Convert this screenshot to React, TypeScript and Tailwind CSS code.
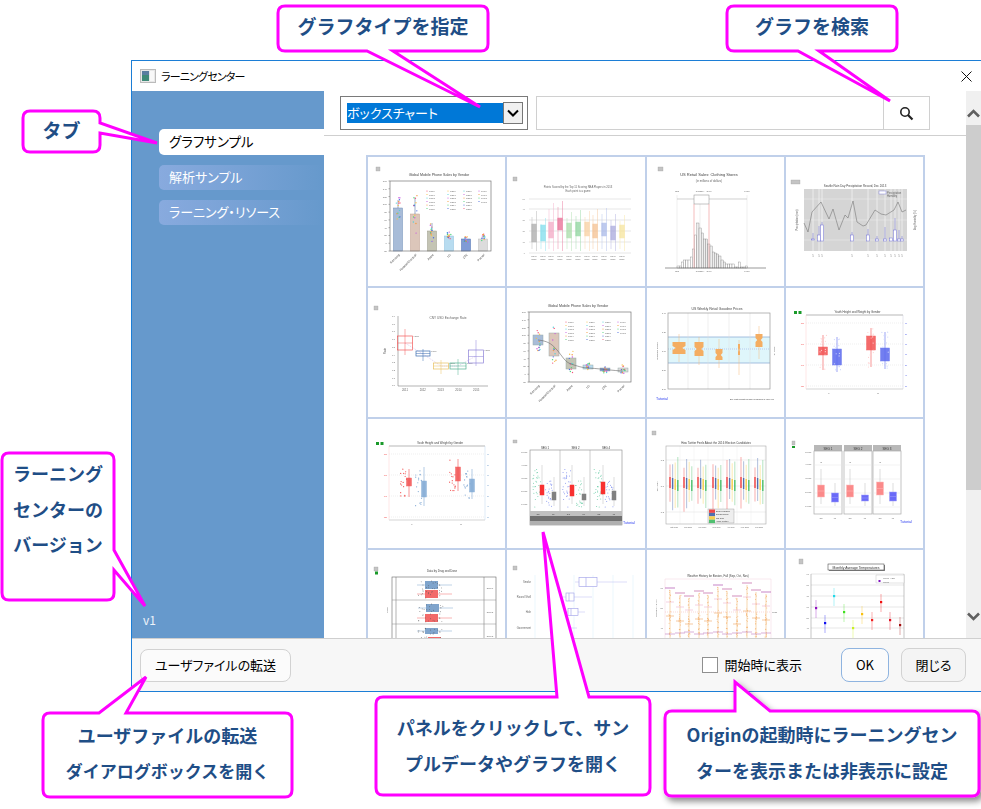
import { ReactNode } from "react";

// ---- thumbnail helpers ----
const SANS = "Liberation Sans, sans-serif";
const PALETTE = ["#f2567a", "#f6c14b", "#4fd1d9", "#c95be0", "#f39a3c", "#4fd67a", "#4a6be0"];

function noise(seed: number) {
    const v = Math.sin(seed * 127.1 + 11.7) * 43758.5453;
    return v - Math.floor(v);
}

function Txt({ x, y, s = 3, c = "#666", a = "middle", r, children }: { x: number; y: number; s?: number; c?: string; a?: "start" | "middle" | "end"; r?: string; children: ReactNode }) {
    return <text x={x} y={y} fontSize={s} fill={c} textAnchor={a} transform={r} fontFamily={SANS}>{children}</text>;
}

function Badge({ x, y, w = 4, h = 4 }: { x: number; y: number; w?: number; h?: number }) {
    return <rect x={x} y={y} width={w} height={h} fill="#c4c4c4" stroke="#999" strokeWidth={0.3} />;
}

function GreenDots({ x, y }: { x: number; y: number }) {
    return (
        <>
            <rect x={x} y={y} width={3} height={3} fill="#1a9a2a" />
            <rect x={x + 4.5} y={y} width={3} height={3} fill="#1a9a2a" />
        </>
    );
}

function Dots({ cx, y0, y1, n, seed, spread = 4, color, r = 0.7 }: { cx: number; y0: number; y1: number; n: number; seed: number; spread?: number; color?: string; r?: number }) {
    const items = [];
    for (let i = 0; i < n; i++) {
        const px = cx + (noise(seed + i) - 0.5) * spread;
        const py = y0 + noise(seed + i * 3 + 0.5) * (y1 - y0);
        items.push(<circle key={i} cx={px} cy={py} r={r} fill={color ?? PALETTE[i % PALETTE.length]} />);
    }
    return <>{items}</>;
}

function Box({ x, y0, y1, w, fill, stroke, med, o = 1 }: { x: number; y0: number; y1: number; w: number; fill: string; stroke?: string; med?: number; o?: number }) {
    return (
        <g opacity={o}>
            <rect x={x - w / 2} y={y0} width={w} height={y1 - y0} fill={fill} stroke={stroke ?? fill} strokeWidth={0.5} />
            {med !== undefined && <line x1={x - w / 2} x2={x + w / 2} y1={med} y2={med} stroke={stroke ?? "#fff"} strokeWidth={0.5} />}
        </g>
    );
}

function VLine({ x, y0, y1, c, w = 0.5, o = 1 }: { x: number; y0: number; y1: number; c: string; w?: number; o?: number }) {
    return <line x1={x} x2={x} y1={y0} y2={y1} stroke={c} strokeWidth={w} opacity={o} />;
}

function HLine({ y, x0, x1, c, w = 0.5, o = 1, dash }: { y: number; x0: number; x1: number; c: string; w?: number; o?: number; dash?: string }) {
    return <line x1={x0} x2={x1} y1={y} y2={y} stroke={c} strokeWidth={w} opacity={o} strokeDasharray={dash} />;
}

function Tutorial({ x, y }: { x: number; y: number }) {
    return <Txt x={x} y={y} s={3.6} c="#2a3cf0" a="start">Tutorial</Txt>;
}

const VENDORS = ["Samsung", "Huawei/Microsoft", "Apple", "LG", "ZTE", "Pocket"];
const DOT_RANGE = [[40, 63], [38, 77], [63, 85], [75, 83], [79, 85], [77, 86]];

function PhoneFrame({ x0, x1, xs, children }: { x0: number; x1: number; xs: number[]; children: ReactNode }) {
    const ticks = [160, 140, 120, 100, 80, 60, 40, 20, 0, -20];
    const columns = [x0 + 37, x0 + 58, x0 + 74, x0 + 89];
    return (
        <>
            <Txt x={71} y={19} s={3.6} c="#444">Global Mobile Phone Sales by Vendor</Txt>
            {ticks.map((t, i) => (
                <g key={t}>
                    <Txt x={x0 - 3} y={25 + i * 7.78} s={2.5} a="end">{t}</Txt>
                    <HLine y={24 + i * 7.78} x0={x0 - 1.5} x1={x0} c="#666" />
                </g>
            ))}
            {children}
            {columns.map((cx, c) =>
                [0, 1, 2, 3, 4, 5].map((row) =>
                    c === 3 && row > 3 ? null : (
                        <g key={`${c}-${row}`}>
                            <circle cx={cx} cy={34 + row * 3.5} r={0.6} fill={PALETTE[(c + row) % PALETTE.length]} />
                            <Txt x={cx + 2} y={35 + row * 3.5} s={2.2} a="start">Q{c + 1}'1{row}</Txt>
                        </g>
                    ),
                ),
            )}
            <rect x={x0} y={24} width={x1 - x0} height={70} fill="none" stroke="#777" strokeWidth={0.7} />
            {VENDORS.map((v, i) => (
                <Txt key={v} x={xs[i] + 2} y={98} s={3} c="#444" a="end" r={`rotate(-45 ${xs[i] + 2} 98)`}>{v}</Txt>
            ))}
        </>
    );
}

function PhoneBars() {
    const xs = [30, 47, 64, 81, 98, 115];
    const tops = [51, 57, 74, 79, 82, 82];
    const fills = ["#a8bcd8", "#dcc6ba", "#c4c4b4", "#b8dcf0", "#7f9bd6", "#dcdcdc"];
    const strokes = ["#6f8db8", "#c0a090", "#9a9a88", "#8cc0e0", "#4a6cb0", "#bbb"];
    return (
        <PhoneFrame x0={22} x1={123} xs={xs}>
            {xs.map((x, i) => (
                <g key={x}>
                    <Box x={x} y0={tops[i]} y1={94} w={9} fill={fills[i]} stroke={strokes[i]} />
                    <VLine x={x} y0={DOT_RANGE[i][0] + 3} y1={tops[i]} c="#3a5a90" />
                    <Dots cx={x} y0={DOT_RANGE[i][0]} y1={DOT_RANGE[i][1]} n={14} seed={i * 17 + 1} />
                </g>
            ))}
        </PhoneFrame>
    );
}

function PhoneBoxes() {
    const xs = [31, 47, 64, 81, 98, 116];
    const boxes = [[47, 57], [45, 68], [70, 81], [77, 81], [80, 83], [80, 84]];
    const fills = ["#a8bcd8", "#dcc6ba", "#c4c4b4", "#b8dcf0", "#7f9bd6", "#dcdcdc"];
    return (
        <PhoneFrame x0={22} x1={124} xs={xs}>
            {xs.map((x, i) => (
                <g key={x}>
                    <Box x={x} y0={boxes[i][0]} y1={boxes[i][1]} w={10} fill={fills[i]} stroke="#9aa" />
                    <Dots cx={x} y0={DOT_RANGE[i][0]} y1={DOT_RANGE[i][1]} n={14} seed={i * 23 + 2} />
                </g>
            ))}
            <path d="M31 52 C40 53 44 55 50 62 S58 74 64 76 S76 80 81 80 S110 83 116 83" fill="none" stroke="#666" strokeWidth={0.6} />
        </PhoneFrame>
    );
}

function PointsBoxes() {
    const xs = [27, 36, 44, 53, 62, 71, 80, 88, 97, 106, 115];
    const cols = ["#aaa", "#7fdcec", "#f3a8c4", "#e86a92", "#a8dca8", "#8cd49c", "#f8cfa0", "#f4c090", "#a8b8e8", "#a8a8dc", "#f6e49c"];
    const boxes = [[67, 85], [68, 84], [65, 81], [61, 73], [66, 81], [65, 79], [65, 79], [67, 81], [66, 79], [69, 83], [68, 81]];
    const tops = [54, 61, 46, 44, 55, 53, 54, 52, 51, 57, 58];
    return (
        <>
            <Badge x={6} y={20} />
            <Txt x={71} y={31} s={2.7}>Points Scored by the Top 11 Scoring NBA Players in 2013</Txt>
            <Txt x={71} y={35} s={2.7}>Each point is a game</Txt>
            {[42, 52, 63, 74, 85, 96].map((y, i) => (
                <g key={y}>
                    <HLine y={y} x0={22} x1={124} c="#ccc" />
                    <Txt x={18} y={y + 1} s={2.2} c="#888" a="end">{50 - i * 10}</Txt>
                </g>
            ))}
            {xs.map((x, i) => (
                <g key={x}>
                    <VLine x={x + 2.5} y0={tops[i]} y1={94} c={cols[i]} w={0.7} o={0.6} />
                    <VLine x={x - 2} y0={tops[i] + 6} y1={92} c={cols[i]} w={1} o={0.4} />
                    <Box x={x} y0={boxes[i][0]} y1={boxes[i][1]} w={4.5} fill={cols[i]} o={0.75} />
                    <Txt x={x} y={100} s={1.9}>Player</Txt>
                    <Txt x={x} y={102.5} s={1.9}>Name</Txt>
                </g>
            ))}
        </>
    );
}

function RetailHistogram() {
    const heights = [2, 2, 6, 8, 8, 8, 11, 19, 33, 45, 40, 35, 29, 29, 24, 22, 16, 15, 14, 12, 8, 6, 4, 4, 4, 4, 1, 1, 6, 1, 1, 2];
    return (
        <>
            <Badge x={11} y={10} w={5} />
            <Txt x={62} y={19} s={4} c="#444">US Retail Sales: Clothing Stores</Txt>
            <Txt x={62} y={25} s={2.8}>(in millions of dollars)</Txt>
            {[30, 100].map((x) => <VLine key={x} x={x} y0={38} y1={111} c="#ddd" />)}
            <VLine x={53} y0={40} y1={111} c="#ddd" />
            <HLine y={42} x0={30} x1={100} c="#bbb" w={0.7} />
            <rect x={47} y={38} width={15} height={9} fill="#fff" stroke="#888" strokeWidth={0.5} />
            {heights.map((h, i) => (
                <rect key={i} x={30 + i * 2.2} y={111 - h} width={2.2} height={h} fill={i > 8 && i < 22 ? "#eee" : "#fff"} stroke="#777" strokeWidth={0.35} />
            ))}
            <VLine x={47} y0={47} y1={111} c="#f0a0a0" w={0.7} />
            <VLine x={62} y0={47} y1={111} c="#f0a0a0" w={0.7} />
            <HLine y={111} x0={18} x1={119} c="#555" w={0.6} />
            {[[30, "7895"], [53, "24012594"], [62, "11096"], [100, "19201"]].map(([x, t]) => (
                <g key={x}>
                    <Txt x={x as number} y={115} s={1.9}>{t}</Txt>
                    <Txt x={x as number} y={35} s={1.9}>{t}</Txt>
                </g>
            ))}
        </>
    );
}

function SeattleRain() {
    const line = "M18 66 L22 75 L26 55 L35 45 L43 62 L47 52 L53 73 L59 58 L62 61 L67 44 L71 65 L77 69 L80 68 L89 53 L95 57 L100 58 L108 53 L112 45 L116 55 L120 53";
    const boxes = [[27, 82, 83, 3], [33, 78, 84, 3], [36, 68, 84, 3], [66, 78, 84, 3], [82, 78, 84, 3], [91, 82, 84, 3], [99, 82, 84, 3], [105, 81, 84, 3], [109, 73, 84, 3], [113, 82, 84, 3], [116, 82, 84, 3]];
    return (
        <>
            <Badge x={5} y={23} w={9} />
            <Txt x={69} y={30} s={2.9} c="#444">Seattle Rain Day Precipitation Record, Dec 2013</Txt>
            <rect x={18} y={32} width={103} height={62} fill="#d5d5d5" />
            {[42, 63, 83].map((y) => <HLine key={y} y={y} x0={18} x1={121} c="#eee" />)}
            {boxes.map(([x]) => <VLine key={x} x={x} y0={32} y1={94} c="#f2f2f2" w={0.8} />)}
            <path d={line} fill="none" stroke="#777" strokeWidth={0.6} />
            {boxes.map(([x, y0, y1, w]) => (
                <g key={x}>
                    <VLine x={x} y0={y0 - (x % 5) * 3} y1={y1} c="#7070d8" />
                    <Box x={x} y0={y0} y1={y1} w={w} fill="#fff" stroke="#7070d8" />
                    <Txt x={x} y={100} s={2.8} c="#888">5</Txt>
                </g>
            ))}
            <rect x={93} y={34} width={7} height={3} fill="#fff" stroke="#7070d8" strokeWidth={0.4} />
            <Txt x={101} y={36.5} s={2.6} a="start">Precipitation</Txt>
            <Txt x={101} y={40} s={2.6} a="start">Humidity</Txt>
            <Txt x={12} y={63} s={2.6} r="rotate(-90 12 63)">Precipitation (mm)</Txt>
            <Txt x={130} y={63} s={2.6} r="rotate(-90 130 63)">Avg Humidity (%)</Txt>
        </>
    );
}

function ExchangeRate() {
    const boxes = [
        { x: 37, y: [48, 62], wh: [41, 67], c: "#f25a5a", w: 15 },
        { x: 55, y: [63, 68], wh: [61, 73], c: "#3a6cb0", w: 14 },
        { x: 73, y: [75, 81], wh: [72, 86], c: "#e8c060", w: 15 },
        { x: 90, y: [75, 81], wh: [71, 87], c: "#50b090", w: 16 },
        { x: 108, y: [62, 75], wh: [52, 78], c: "#8c80d8", w: 15 },
    ];
    return (
        <>
            <Badge x={6} y={18} />
            <Txt x={80} y={31} s={3.2}>CNY USD Exchange Rate</Txt>
            <HLine y={98} x0={30} x1={120} c="#666" />
            <VLine x={30} y0={28} y1={98} c="#666" />
            {[0, 1, 2, 3, 4, 5, 6, 7, 8, 9].map((i) => <Txt key={i} x={27} y={29 + i * 7.7} s={2.2} a="end">0.{9 - i}</Txt>)}
            <Txt x={18} y={63} s={3} r="rotate(-90 18 63)">Rate</Txt>
            <path d="M37 55 L55 66 L73 78 L90 78 L108 68" fill="none" stroke="#c0a0e0" strokeWidth={0.5} strokeDasharray="1 1" />
            {boxes.map((b) => (
                <g key={b.x}>
                    <VLine x={b.x} y0={b.wh[0]} y1={b.wh[1]} c={b.c} />
                    <rect x={b.x - b.w / 2} y={b.y[0]} width={b.w} height={b.y[1] - b.y[0]} fill="none" stroke={b.c} strokeWidth={0.7} />
                    <HLine y={(b.y[0] + b.y[1]) / 2} x0={b.x - b.w / 2} x1={b.x + b.w / 2} c={b.c} />
                    <Txt x={b.x + b.w / 2 + 1} y={b.y[0] + 1} s={1.8} a="start">6.2977</Txt>
                </g>
            ))}
            {[2011, 2012, 2013, 2014, 2015].map((y, i) => <Txt key={y} x={37 + i * 17.8} y={103} s={2.8}>{y}</Txt>)}
        </>
    );
}

function GasolinePrices() {
    // x, width, top, notch, bottom, whisker top, whisker bottom
    const notches = [[32, 13, 54, 60, 66, 46, 74], [52, 9, 54, 61, 68, 49, 77], [72, 7, 61, 67, 72, 51, 80], [92, 2, 56, 62, 67, 52, 87], [112, 7, 46, 52, 59, 38, 71]];
    return (
        <>
            <Txt x={70} y={22} s={3.4} c="#444">US Weekly Retail Gasoline Prices</Txt>
            <rect x={21} y={49} width={102} height={26} fill="#dff6fb" />
            <HLine y={49} x0={21} x1={123} c="#8fb0d8" w={0.8} />
            <HLine y={75} x0={21} x1={123} c="#8fb0d8" w={0.8} />
            <HLine y={61} x0={21} x1={123} c="#8f9fe0" dash="1 1" />
            {[41, 61, 82, 103].map((x) => <VLine key={x} x={x} y0={25} y1={101} c="#ddd" />)}
            {notches.map(([x, w, top, mid, bottom, wt, wb]) => (
                <g key={x}>
                    <VLine x={x} y0={wt} y1={wb} c="#f4b878" />
                    <path d={`M${x - w / 2} ${top} H${x + w / 2} V${mid - 2} L${x + w / 4} ${mid} L${x + w / 2} ${mid + 2} V${bottom} H${x - w / 2} V${mid + 2} L${x - w / 4} ${mid} L${x - w / 2} ${mid - 2} Z`} fill="#f4ad62" />
                </g>
            ))}
            <rect x={21} y={25} width={102} height={76} fill="none" stroke="#999" strokeWidth={0.7} />
            {["3.40", "3.20", "3.00", "2.80", "2.60"].map((t, i) => <Txt key={t} x={19} y={26 + i * 19} s={2} a="end">{t}</Txt>)}
            <Txt x={11} y={63} s={2.5} r="rotate(-90 11 63)">Gasoline Prices</Txt>
            <Txt x={127} y={63} s={2.2} r="rotate(90 127 63)">Gasoline</Txt>
            <Tutorial x={9} y={112} />
            <Txt x={127} y={112} s={1.9} c="#444" a="end">Box Width indicates number of samples in each year</Txt>
        </>
    );
}

function YouthFrame({ title, x0, x1, boxes, red, blue, seed, leftC, rightC, bw, dx, dotRed, dotBlue }: { title: string; x0: number; x1: number; boxes: number[][]; red: string; blue: string; seed: number; leftC: string; rightC: string; bw: number; dx: number; dotRed: string; dotBlue: string }) {
    return (
        <>
            <GreenDots x={8} y={23} />
            <Txt x={(x0 + x1) / 2 + 3} y={25} s={2.9} c="#444">{title}</Txt>
            {[35, 56, 77, 98].map((y) => <HLine key={y} y={y} x0={x0} x1={x1} c="#ddd" dash="1 1" />)}
            <HLine y={27} x0={x0} x1={x1} c="#999" w={0.7} />
            <HLine y={101} x0={x0} x1={x1} c="#aaa" />
            <VLine x={x0} y0={27} y1={101} c={leftC} />
            <VLine x={x1} y0={27} y1={101} c={rightC} />
            {[35, 56, 77, 98].map((y, i) => <Txt key={y} x={x0 - 2} y={y + 1} s={2} c={red} a="end">{180 - i * 20}</Txt>)}
            {[35, 46, 56, 66, 77, 87, 98].map((y, i) => <Txt key={y} x={x1 + 2} y={y + 1} s={2} c={blue} a="start">{90 - i * 10}</Txt>)}
            {boxes.map(([x, y0, y1, wt, wb], i) => {
                const c = i % 2 ? blue : red;
                return (
                    <g key={x}>
                        <VLine x={x} y0={wt} y1={wb} c={c} w={0.6} />
                        <Box x={x} y0={y0} y1={y1} w={bw} fill={c} o={0.85} />
                        <Dots cx={x + dx} y0={wt} y1={wb} n={16} seed={seed + i * 7} spread={7} color={i % 2 ? dotBlue : dotRed} r={0.6} />
                    </g>
                );
            })}
            <Txt x={x0 + 23} y={106} s={2.4}>F</Txt>
            <Txt x={x0 + 72} y={106} s={2.4}>M</Txt>
        </>
    );
}

function SegmentPanel() {
    const reds = [[35, 66, 76], [65, 66, 77], [96, 63, 75]];
    const grays = [[47, 73, 81], [77, 75, 81], [107, 72, 81]];
    return (
        <>
            <Badge x={6} y={21} h={3} />
            <rect x={23} y={31} width={92} height={75} fill="#fff" stroke="#888" strokeWidth={0.6} />
            <rect x={23} y={92} width={92} height={5} fill="#c0c0c0" />
            <rect x={23} y={97} width={92} height={5} fill="#707070" />
            <rect x={23} y={102} width={92} height={4} fill="#b0b0b0" />
            {[53, 83].map((x) => <VLine key={x} x={x} y0={31} y1={92} c="#999" />)}
            {["SEG 1", "SEG 2", "SEG 4"].map((t, i) => <Txt key={t} x={38 + i * 30.5} y={30} s={2.8} c="#333">{t}</Txt>)}
            {[34, 47, 60, 73, 86].map((y, i) => <Txt key={y} x={21} y={y} s={2} a="end">{`${5 - i}.0x10⁵`}</Txt>)}
            {reds.map(([x, y0, y1], i) => (
                <g key={x}>
                    <Dots cx={x - 5} y0={50} y1={88} n={30} seed={i * 9 + 50} spread={9} color={i % 2 ? "#8090ee" : "#70ceaa"} r={0.5} />
                    <VLine x={x} y0={46} y1={85} c="#bbb" />
                    <Box x={x} y0={y0} y1={y1} w={4} fill="#f83030" />
                </g>
            ))}
            {grays.map(([x, y0, y1], i) => (
                <g key={x}>
                    <Dots cx={x - 5} y0={62} y1={88} n={24} seed={i * 11 + 70} spread={8} color={i % 2 ? "#70ceaa" : "#8090ee"} r={0.5} />
                    <VLine x={x} y0={58} y1={87} c="#bbb" />
                    <Box x={x} y0={y0} y1={y1} w={4} fill="#808080" />
                </g>
            ))}
            {[0, 1, 2, 3, 4, 5].map((i) => <Txt key={i} x={31 + i * 15.2} y={96} s={2.2} c="#333">{i % 2 ? "MI" : "CC"}</Txt>)}
            <Tutorial x={116} y={105} />
        </>
    );
}

function TwitterFeeds() {
    const groups = [23, 37, 51, 66, 80, 94, 108];
    const cols = ["#f04848", "#5070b0", "#f8d050", "#50c070"];
    return (
        <>
            <Badge x={5} y={12} />
            <Txt x={69} y={25} s={2.9} c="#444">How Twitter Feels About the 2016 Election Candidates</Txt>
            {groups.map((g) => <VLine key={g} x={g + 10} y0={27} y1={105} c="#eee" />)}
            {[41, 67, 93].map((y) => <HLine key={y} y={y} x0={19} x1={119} c="#ddd" />)}
            {groups.map((g, i) =>
                cols.map((c, j) => {
                    const top = 37 + noise(i * 4 + j) * 12;
                    const bottom = 78 + noise(i * 5 + j + 9) * 15;
                    return (
                        <g key={`${g}-${c}`}>
                            <VLine x={g + j * 2.6} y0={top} y1={bottom} c={c} w={1.1} o={0.4} />
                            <VLine x={g + j * 2.6} y0={58 + j} y1={69 + j} c={c} w={1.4} />
                        </g>
                    );
                }),
            )}
            <rect x={19} y={27} width={100} height={78} fill="none" stroke="#aaa" strokeWidth={0.6} />
            <rect x={61} y={90} width={26} height={14} fill="#eee" stroke="#777" strokeWidth={0.3} />
            {cols.map((c, i) => (
                <g key={c}>
                    <rect x={62} y={90.5 + i * 3.4} width={6} height={3.4} fill={c} />
                    <Txt x={69} y={93 + i * 3.4} s={2} c="#333" a="start">{["Bernie Sanders", "Donald Trump", "Ted Cruz", "Hillary Clinton"][i]}</Txt>
                </g>
            ))}
            {["Oct 2015", "Jan 2016", "Feb 2016", "Mar 2016", "Apr 2016", "May 2016", "Jun 2016"].map((t, i) => <Txt key={t} x={27 + i * 14.2} y={109} s={1.9}>{t}</Txt>)}
            {["0.5", "0.0", "-0.5"].map((t, i) => <Txt key={t} x={17} y={42 + i * 26} s={2.4} a="end">{t}</Txt>)}
            <Txt x={11} y={67} s={2.3} r="rotate(-90 11 67)">Sentiment</Txt>
        </>
    );
}

function SegmentStrips() {
    const panels = [[28, 28], [58, 28], [87, 28]];
    const reds = [[35, 66, 78], [64, 66, 78], [94, 63, 76]];
    const blues = [[49, 74, 83], [79, 76, 82], [107, 73, 82]];
    return (
        <>
            <Badge x={6} y={22} w={3} />
            <rect x={6} y={27} width={3} height={2} fill="#1a9a2a" />
            {panels.map(([x, w], i) => (
                <g key={x}>
                    <rect x={x} y={26} width={w} height={6} fill="#b8b8b8" />
                    <Txt x={x + w / 2} y={30.5} s={3} c="#333">{`SEG ${i + 1}`}</Txt>
                    <rect x={x} y={32} width={w} height={63} fill="#fff" stroke="#aaa" strokeWidth={0.7} />
                    {[46, 60, 74, 88].map((y) => <HLine key={y} y={y} x0={x} x1={x + w} c="#e4e4e4" />)}
                </g>
            ))}
            {reds.map(([x, y0, y1]) => (
                <g key={x}>
                    <VLine x={x} y0={50} y1={85} c="#bbb" />
                    <rect x={x - 0.3} y={43} width={0.8} height={0.8} fill="#555" />
                    <Box x={x} y0={y0} y1={y1} w={7} fill="#fb8a8a" med={(y0 + y1) / 2} stroke="#fbb" />
                </g>
            ))}
            {blues.map(([x, y0, y1]) => (
                <g key={x}>
                    <VLine x={x} y0={64} y1={87} c="#bbb" />
                    <Box x={x} y0={y0} y1={y1} w={7} fill="#6a6af8" med={(y0 + y1) / 2} stroke="#a0a0fa" />
                </g>
            ))}
            {[34, 46, 60, 74, 88].map((y, i) => <Txt key={y} x={26} y={y} s={2} a="end">{`${5 - i}.0x10⁵`}</Txt>)}
            {[35, 49, 64, 79, 94, 107].map((x, i) => <Txt key={x} x={x} y={100} s={2.2}>{i % 2 ? "MI" : "CC"}</Txt>)}
            <Tutorial x={114} y={104} />
        </>
    );
}

function DrugDose() {
    const rows = [[57, 31, 39, "#7fa4cc"], [57, 40, 48, "#f26a6a"], [58, 54, 62, "#7fa4cc"], [57, 64, 72, "#f26a6a"], [57, 78, 84, "#7fa4cc"], [60, 87, 92, "#f26a6a"]] as const;
    return (
        <>
            <Badge x={6} y={17} />
            <rect x={7} y={21.5} width={3} height={3} fill="#1a9a2a" />
            <Txt x={74} y={22} s={2.9} c="#444">Data by Drug and Dose</Txt>
            <rect x={24} y={27} width={104} height={70} fill="#fff" stroke="#666" strokeWidth={0.6} />
            <VLine x={28} y0={27} y1={97} c="#666" />
            <VLine x={116} y0={27} y1={97} c="#666" />
            {[50, 74].map((y) => <HLine key={y} y={y} x0={24} x1={128} c="#888" />)}
            {rows.map(([x, y0, y1, c], i) => (
                <g key={y0}>
                    <HLine y={(y0 + y1) / 2} x0={x - 8} x1={x + 27} c={c} />
                    <rect x={x} y={y0} width={13} height={y1 - y0} fill={c} />
                    <Dots cx={x + 5} y0={y0} y1={y1} n={16} seed={i * 5 + 90} spread={24} color="#555" r={0.45} />
                </g>
            ))}
            {["Drug 1", "Drug 2", "Drug 3"].map((t, i) => <Txt key={t} x={122} y={39 + i * 24} s={2.2}>{t}</Txt>)}
            <Txt x={20} y={60} s={2.4} r="rotate(-90 20 60)">Dose</Txt>
        </>
    );
}

function WordBoxes() {
    const rows = [{ l: "Smoke", y: 32, b: [72, 90], m: 79, e: 120, h: 9 }, { l: "Round Shell", y: 47, b: [59, 67], m: 62, e: 85, h: 8 }, { l: "Hole", y: 62, b: [61, 71], m: 64, e: 78, h: 7 }, { l: "Government", y: 78, b: [62, 63], m: 62, e: 70, h: 1 }];
    return (
        <>
            <Badge x={6} y={16} />
            {[28, 47, 67, 86, 106, 126].map((x) => <VLine key={x} x={x} y0={25} y1={89} c="#d6ecfa" />)}
            {rows.map((r) => (
                <g key={r.l}>
                    <Txt x={24} y={r.y + 1} s={2.6} a="end">{r.l}</Txt>
                    <HLine y={r.y} x0={r.b[0] - 4} x1={r.e} c="#b8b8f0" />
                    <rect x={r.b[0]} y={r.y - r.h / 2} width={r.b[1] - r.b[0]} height={r.h} fill="#fff" stroke="#9c9ce8" strokeWidth={0.6} />
                    <VLine x={r.m} y0={r.y - r.h / 2} y1={r.y + r.h / 2} c="#9c9ce8" w={0.6} />
                </g>
            ))}
        </>
    );
}

function WeatherBoston() {
    const xs = [23, 33, 42, 52, 61, 71, 80, 90, 100, 109, 119];
    const tops = [38, 43, 46, 41, 43, 35, 39, 46, 33, 40, 42];
    return (
        <>
            <Txt x={71} y={27} s={2.9} c="#444">Weather History for Boston, Fall (Sep, Oct, Nov)</Txt>
            {[38, 58, 78].map((y, i) => <Txt key={y} x={16} y={y + 1} s={2.2} a="end">{60 - i * 10}</Txt>)}
            <Txt x={10} y={58} s={2.3} r="rotate(-90 10 58)">Temperature (°F)</Txt>
            <HLine y={29} x0={18} x1={124} c="#f0d0dc" />
            <VLine x={18} y0={29} y1={92} c="#f0d0dc" />
            <VLine x={124} y0={29} y1={92} c="#f0d0dc" />
            <HLine y={62} x0={18} x1={124} c="#f4b0b0" dash="1 1" />
            <Txt x={125} y={63} s={2.1} a="start">Mean</Txt>
            {xs.map((x, i) => (
                <g key={x}>
                    <VLine x={x} y0={tops[i] + 2} y1={92} c="#f8d8b0" w={2} o={0.5} />
                    <Dots cx={x} y0={tops[i] + 2} y1={90} n={24} seed={i * 3 + 120} spread={2} color="#f4a050" r={0.45} />
                    <HLine y={tops[i]} x0={x - 5} x1={x + 5} c={i % 5 === 0 ? "#b050b0" : "#c060a0"} w={0.7} />
                    <HLine y={tops[i] + 14} x0={x - 4} x1={x + 4} c="#e8a0c0" />
                    <HLine y={tops[i] + 28} x0={x - 4} x1={x + 4} c="#e89040" />
                    <HLine y={84 - (i % 3)} x0={x - 5} x1={x + 5} c="#c890c8" w={0.7} />
                </g>
            ))}
        </>
    );
}

function MonthlyTemperature() {
    const pts = [[30, 58, "#9010c0"], [39, 73, "#1010f0"], [48, 46, "#20d8e8"], [58, 62, "#40e020"], [67, 78, "#c8f020"], [76, 64, "#f8c010"], [86, 70, "#f02020"], [95, 52, "#f01010"], [104, 70, "#e01020"], [114, 75, "#a01010"]] as const;
    return (
        <>
            <Badge x={13} y={9} h={5} />
            <rect x={43} y={15} width={56} height={6} fill="#888" />
            <rect x={42} y={14} width={56} height={6} fill="#fff" stroke="#333" strokeWidth={0.5} />
            <Txt x={70} y={18.5} s={3.4} c="#333">Monthly Average Temperatures</Txt>
            {[24, 35, 46, 57, 68, 78].map((y, i) => (
                <g key={y}>
                    <HLine y={y} x0={25} x1={118} c="#ccc" />
                    <Txt x={23} y={y + 1} s={2.2} a="end">{90 - i * 10}</Txt>
                </g>
            ))}
            <VLine x={25} y0={24} y1={89} c="#888" />
            <VLine x={118} y0={24} y1={89} c="#888" />
            {pts.map(([x, y, c]) => (
                <g key={x}>
                    <VLine x={x} y0={y - 8} y1={y + 10} c={c} w={0.7} o={0.5} />
                    <rect x={x - 1} y={y - 1} width={2.2} height={2.2} fill={c} />
                </g>
            ))}
            <rect x={90} y={25} width={28} height={8} fill="#fff" stroke="#bbb" strokeWidth={0.4} />
            <Txt x={97} y={28.5} s={2.4} a="start">Mean ± SD</Txt>
            <rect x={92.5} y={30} width={2} height={2} fill="#8010c0" />
            <Txt x={97} y={32.5} s={2.4} a="start">Mean</Txt>
        </>
    );
}

const THUMBS = [
    <><Badge x={8} y={10} /><PhoneBars /></>,
    <PointsBoxes />,
    <RetailHistogram />,
    <SeattleRain />,
    <ExchangeRate />,
    <PhoneBoxes />,
    <GasolinePrices />,
    <YouthFrame title="Youth Height and Weight by Gender" x0={20} x1={117} seed={200} leftC="#fcc" rightC="#ccd" red="#f25050" blue="#5a68ee" bw={9} dx={0} dotRed="#ffd0d0" dotBlue="#cdd6fb" boxes={[[37, 59, 67, 47, 82], [51, 61, 77, 49, 84], [85, 48, 62, 40, 79], [99, 60, 73, 44, 81]]} />,
    <YouthFrame title="Youth Height and Weight by Gender" x0={21} x1={117} seed={260} leftC="#fcc" rightC="#bcd6ee" red="#f25050" blue="#7fa8d4" bw={5} dx={-5} dotRed="#f25050" dotBlue="#7fa8d4" boxes={[[41, 59, 67, 50, 78], [56, 62, 78, 48, 87], [90, 48, 62, 40, 72], [104, 60, 73, 50, 80]]} />,
    <SegmentPanel />,
    <TwitterFeeds />,
    <SegmentStrips />,
    <DrugDose />,
    <WordBoxes />,
    <WeatherBoston />,
    <MonthlyTemperature />,
];

// ---- callouts ----
type Pt = number[];

function bubblePath(x: number, y: number, w: number, h: number, side: "top" | "right" | "bottom", tail: Pt[]) {
    const r = 7;
    const pts = (s: string) => (side === s ? tail.map((p) => `L${p[0]} ${p[1]}`).join(" ") : "");
    return `M${x + r} ${y} ${pts("top")} L${x + w - r} ${y} Q${x + w} ${y} ${x + w} ${y + r} ${pts("right")} L${x + w} ${y + h - r} Q${x + w} ${y + h} ${x + w - r} ${y + h} ${pts("bottom")} L${x + r} ${y + h} Q${x} ${y + h} ${x} ${y + h - r} L${x} ${y + r} Q${x} ${y} ${x + r} ${y} Z`;
}

function Callouts() {
    return (
        <svg className="absolute inset-0 h-[809px] w-[981px]" viewBox="0 0 981 809">
            <defs>
                <filter id="callout-shadow" x="-10%" y="-10%" width="120%" height="130%">
                    <feDropShadow dx="3" dy="4" stdDeviation="3" floodColor="#000" floodOpacity="0.45" />
                </filter>
            </defs>
            <g fill="#fff" stroke="#ff00ff" strokeWidth={3}>
                <path d={bubblePath(278, 6, 210, 45, "bottom", [[393, 51], [480, 107], [367, 51]])} />
                <path d={bubblePath(727, 6, 170, 45, "bottom", [[819, 51], [890, 101], [798, 51]])} />
                <path d={bubblePath(23, 111, 77, 41, "right", [[100, 123], [157, 143], [100, 133]])} />
                <path d={bubblePath(2, 453, 112, 147, "right", [[114, 550], [145, 606], [114, 570]])} />
                <path d={bubblePath(43, 713, 249, 84, "top", [[99, 713], [146, 677], [126, 713]])} />
                <path d={bubblePath(376, 697, 274, 98, "top", [[557, 697], [543, 532], [589, 697]])} />
                <path d={bubblePath(665, 711, 314, 85, "top", [[735, 711], [735, 682], [770, 711]])} filter="url(#callout-shadow)" />
            </g>
        </svg>
    );
}

function CalloutText({ className, children }: { className: string; children: ReactNode }) {
    return (
        <div className={`absolute whitespace-nowrap text-center font-bold text-[#1f4e86] [font-feature-settings:normal] font-['Noto_Sans_CJK_JP',sans-serif] ${className}`}>
            {children}
        </div>
    );
}

// ---- dialog ----
function SideTab({ label, active }: { label: string; active?: boolean }) {
    return (
        <div className={active
            ? "flex h-[26px] items-center rounded-l-[5px] bg-white pb-[2px] pl-[10px] text-[13.5px] text-black"
            : "flex h-[25px] items-center rounded-l-[5px] bg-gradient-to-r from-[#88aade] to-[#6699cc] pb-[2px] pl-[10px] text-white"}>
            {label}
        </div>
    );
}

function Chevron({ up }: { up?: boolean }) {
    return (
        <svg width="13" height="9" viewBox="0 0 13 9" className="block">
            <path d={up ? "M1 7.5 L6.5 2 L12 7.5" : "M1 1.5 L6.5 7 L12 1.5"} fill="none" stroke="#606060" strokeWidth="2.6" />
        </svg>
    );
}

export default function App() {
    return (
        <div className="relative h-[809px] w-[981px] overflow-hidden bg-white pl-[131px] pt-[60px] font-['Noto_Sans_CJK_JP',sans-serif] text-[13px] [font-feature-settings:'palt']">
            <div className="flex h-[632px] flex-col border border-r-0 border-[#1c7ed6] bg-white">
                {/* title bar */}
                <div className="flex h-[30px] items-center pl-[8px] pr-[8px]">
                    <svg width="16" height="14" viewBox="0 0 16 14" className="mr-[5px]">
                        <rect x="0.5" y="0.5" width="15" height="13" fill="#e8e8e8" stroke="#bbb" />
                        <rect x="2" y="2" width="7" height="10" fill="#3f8a78" />
                        <rect x="2" y="2" width="7" height="4" fill="#5a7ea0" />
                        <rect x="10" y="2" width="4" height="10" fill="#f8f8f8" />
                    </svg>
                    <span className="text-[11px] tracking-[-0.8px] text-black">ラーニングセンター</span>
                    <svg width="11" height="11" viewBox="0 0 11 11" className="ml-auto mr-[1px]">
                        <path d="M0.5 0.5 L10.5 10.5 M10.5 0.5 L0.5 10.5" stroke="#111" strokeWidth="1" />
                    </svg>
                </div>

                <div className="flex h-[547px]">
                    {/* side tabs */}
                    <div className="flex w-[192px] flex-col bg-[#6699cc] pl-[27px] pt-[38px]">
                        <div className="flex flex-col gap-[10px]">
                            <SideTab label="グラフサンプル" active />
                            <SideTab label="解析サンプル" />
                            <SideTab label="ラーニング・リソース" />
                        </div>
                        <span className="mb-[9px] ml-[-16px] mt-auto text-[12px] text-[#eef3fa]">v1</span>
                    </div>

                    {/* gallery */}
                    <div className="flex min-w-0 flex-1 flex-col">
                        <div className="flex h-[45px] shrink-0 gap-[8px] border-b border-[#cfcfcf] pl-[16px] pr-[36px] pt-[5px]">
                            <div className="flex h-[34px] w-[188px] items-center border border-[#7a7a7a] pl-[6px]">
                                <div className="flex h-[20px] w-[156px] items-center bg-[#0078d7] text-white">ボックスチャート</div>
                                <div className="flex h-[22px] w-[20px] items-center justify-center border border-[#777] bg-[#f0f0f0]">
                                    <svg width="12" height="8" viewBox="0 0 12 8">
                                        <path d="M1 1.5 L6 6.5 L11 1.5" fill="none" stroke="#000" strokeWidth="2" />
                                    </svg>
                                </div>
                            </div>
                            <div className="flex h-[34px] flex-1 border border-[#d0d0d0]">
                                <div className="flex-1" />
                                <div className="flex w-[46px] items-center justify-center border-l border-[#d0d0d0]">
                                    <svg width="15" height="15" viewBox="0 0 15 15">
                                        <circle cx="6" cy="6" r="4.2" fill="none" stroke="#222" strokeWidth="1.6" />
                                        <path d="M9 9 L13.5 13.5" stroke="#222" strokeWidth="2.2" />
                                    </svg>
                                </div>
                            </div>
                        </div>

                        <div className="min-h-0 flex-1 overflow-hidden pl-[42px] pt-[19px]">
                            <div className="grid w-fit grid-cols-[repeat(4,137.25px)] auto-rows-[129px] gap-[2px] bg-[#c0d0ea] p-[2px]">
                                {THUMBS.map((thumb, i) => (
                                    <div key={i} className="bg-white">
                                        <svg width="137" height="129" viewBox="0 0 137 129" className="blur-[0.35px]">{thumb}</svg>
                                    </div>
                                ))}
                            </div>
                        </div>
                    </div>

                    {/* scrollbar */}
                    <div className="flex w-[15px] shrink-0 flex-col bg-[#f0f0f0]">
                        <div className="flex h-[34px] items-center justify-center pt-[10px]"><Chevron up /></div>
                        <div className="h-[365px] bg-[#cdcdcd]" />
                        <div className="flex flex-1 items-end justify-center pb-[17px]"><Chevron /></div>
                    </div>
                </div>

                {/* footer */}
                <div className="flex flex-1 items-center border-t border-[#cfcfcf] bg-[#f7f7f7] pl-[8px] pr-[15px]">
                    <button className="h-[33px] w-[151px] rounded-[8px] border border-[#d2d2d2] bg-[#fbfbfb] text-black">ユーザファイルの転送</button>
                    <div className="ml-auto mr-[39px] flex items-center gap-[6px]">
                        <div className="h-[16px] w-[16px] border border-[#8f8f8f] bg-white" />
                        <span className="text-black">開始時に表示</span>
                    </div>
                    <button className="mr-[12px] h-[34px] w-[48px] rounded-[8px] border border-[#8fb4e0] bg-[#fbfbfb] text-black">OK</button>
                    <button className="h-[34px] w-[65px] rounded-[8px] border border-[#d2d2d2] bg-[#f4f4f4] text-black">閉じる</button>
                </div>
            </div>

            {/* annotations over the dialog */}
            <Callouts />
            <CalloutText className="left-[278px] top-[12px] w-[210px] text-[19px] leading-[28px]">グラフタイプを指定</CalloutText>
            <CalloutText className="left-[727px] top-[12px] w-[170px] text-[19px] leading-[28px]">グラフを検索</CalloutText>
            <CalloutText className="left-[23px] top-[116px] w-[77px] text-[19px] leading-[28px]">タブ</CalloutText>
            <CalloutText className="left-[2px] top-[456px] w-[112px] text-[18px] leading-[35.5px]">ラーニング<br />センターの<br />バージョン</CalloutText>
            <CalloutText className="left-[43px] top-[718px] w-[249px] text-[18px] leading-[35px]">ユーザファイルの転送<br /><span className="text-[17px]">ダイアログボックスを開く</span></CalloutText>
            <CalloutText className="left-[376px] top-[709px] w-[274px] text-[18px] leading-[36px]">パネルをクリックして、サン<br />プルデータやグラフを開く</CalloutText>
            <CalloutText className="left-[665px] top-[716px] w-[314px] text-[18px] leading-[36px]">Originの起動時にラーニングセン<br />ターを表示または非表示に設定</CalloutText>
        </div>
    );
}
